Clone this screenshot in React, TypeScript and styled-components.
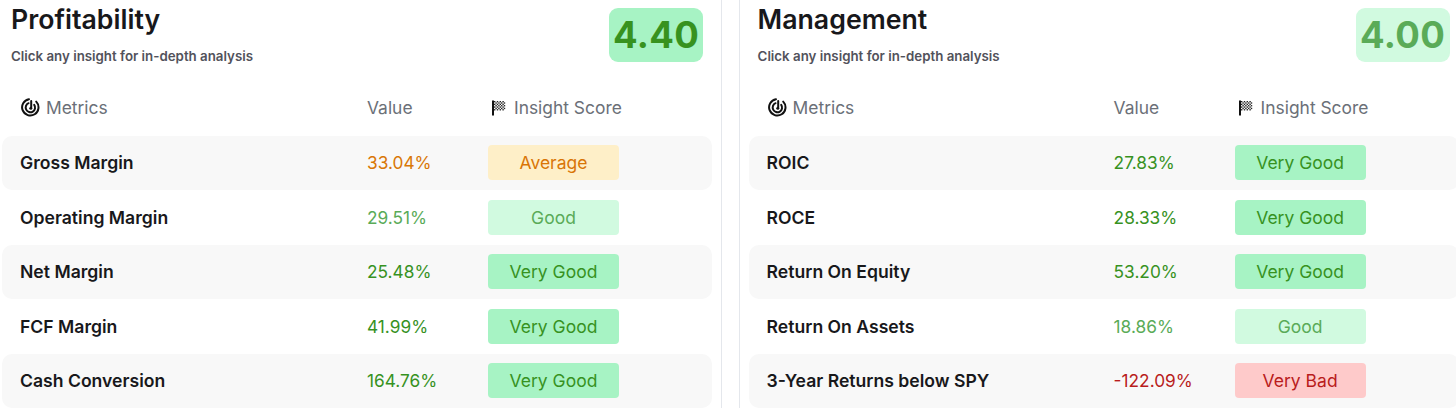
import React from "react";
import styled, { createGlobalStyle } from "styled-components";

const Global = createGlobalStyle`
  html, body { margin: 0; padding: 0; background: #fff; }
  body { font-family: Inter, "Liberation Sans", sans-serif; }
`;

type Level = "average" | "good" | "veryGood" | "veryBad";

const palette: Record<Level, { bg: string; fg: string; value: string }> = {
  average: { bg: "#feefc8", fg: "#d97506", value: "#d97706" },
  good: { bg: "#d1fae0", fg: "#5aab58", value: "#5aab58" },
  veryGood: { bg: "#a7f3c4", fg: "#37921f", value: "#37921f" },
  veryBad: { bg: "#fecaca", fg: "#b91c1c", value: "#b91c1c" },
};

const Page = styled.div`
  width: 1456px;
  height: 408px;
  overflow: hidden;
  display: flex;
  background: #fff;
`;

const Panel = styled.section`
  width: 721px;
  flex: none;
  padding: 0 9px 0 2px;
  box-sizing: border-box;
`;

const Gutter = styled.div`
  width: 19px;
  flex: none;
  height: 408px;
  box-sizing: border-box;
  border-left: 1px solid #e4e7ec;
  border-right: 1px solid #e4e7ec;
  margin-right: 6.6px;
  background: #fff;
`;

const Head = styled.header`
  height: 70px;
  display: flex;
  justify-content: space-between;
  align-items: flex-start;
  padding: 0 9px 0 9px;
`;

const Titles = styled.div`
  display: flex;
  flex-direction: column;
`;

const Title = styled.h2`
  margin: 3px 0 0;
  font-size: 26.7px;
  line-height: 32px;
  font-weight: 600;
  color: #18181b;
`;

const Sub = styled.p`
  margin: 13px 0 0;
  font-size: 13.3px;
  line-height: 16px;
  font-weight: 600;
  color: #52525b;
`;

const Score = styled.div<{ $level: Level }>`
  margin-top: 8px;
  width: 94px;
  height: 54px;
  border-radius: 9px;
  display: flex;
  align-items: center;
  justify-content: center;
  font-size: 36.5px;
  font-weight: 700;
  letter-spacing: 0.3px;
  background: ${(p) => palette[p.$level].bg};
  color: ${(p) => palette[p.$level].fg};
`;

const Cols = styled.div`
  display: grid;
  grid-template-columns: 365px 121px 131px;
  align-items: center;
`;

const HeaderRow = styled(Cols)`
  height: 65.5px;
  box-sizing: border-box;
  padding-top: 10px;
  font-size: 17.4px;
  color: #6b7078;
`;

const HeaderCell = styled.div<{ $indent?: number; $gap?: number }>`
  display: flex;
  align-items: center;
  white-space: nowrap;
  gap: ${(p) => p.$gap ?? 5}px;
  padding-left: ${(p) => p.$indent ?? 0}px;
`;

const Glyph = styled.svg`
  flex: none;
`;

const Row = styled(Cols)<{ $shaded: boolean }>`
  height: 54.5px;
  border-radius: 10px;
  background: ${(p) => (p.$shaded ? "#f8f8f8" : "transparent")};
`;

const Name = styled.div`
  padding-left: 18px;
  font-size: 17.6px;
  font-weight: 600;
  color: #18181b;
`;

const Value = styled.div<{ $level: Level }>`
  font-size: 17.3px;
  color: ${(p) => palette[p.$level].value};
`;

const Badge = styled.div<{ $level: Level }>`
  height: 35px;
  border-radius: 4px;
  display: flex;
  align-items: center;
  justify-content: center;
  font-size: 17.5px;
  background: ${(p) => palette[p.$level].bg};
  color: ${(p) => palette[p.$level].fg};
`;

const RadarIcon = () => (
  <Glyph width="19" height="19" viewBox="0 0 19 19" fill="none" stroke="#111" strokeWidth="2" strokeLinecap="round">
    <path d="M8 1.2A8.2 8.2 0 1 0 15.2 3.6" />
    <path d="M7.6 5.2A4.7 4.7 0 1 0 13.2 6.8" />
    <path d="M10.2 3V9.5" />
    <circle cx="9.8" cy="10.2" r="1.5" fill="#111" stroke="none" />
  </Glyph>
);

const FlagIcon = () => {
  const cells = [];
  for (let r = 0; r < 7; r++) {
    for (let c = 0; c < 8; c++) {
      if ((r + c) % 2 === 0)
        cells.push(<rect key={`${r}-${c}`} x={3 + c * 1.4} y={1 + r * 1.35} width="1.4" height="1.35" fill="#222" />);
    }
  }
  return (
    <Glyph width="18" height="16" viewBox="0 0 18 16">
      <rect x="1" y="0.5" width="2" height="15" fill="#111" />
      {cells}
    </Glyph>
  );
};

type Metric = { name: string; value: string; level: Level; label: string };

const Table = ({ title, score, level, metrics }: { title: string; score: string; level: Level; metrics: Metric[] }) => (
  <Panel>
    <Head>
      <Titles>
        <Title>{title}</Title>
        <Sub>Click any insight for in-depth analysis</Sub>
      </Titles>
      <Score $level={level}>{score}</Score>
    </Head>
    <HeaderRow>
      <HeaderCell $indent={19} $gap={6}>
        <RadarIcon />
        Metrics
      </HeaderCell>
      <HeaderCell>Value</HeaderCell>
      <HeaderCell $indent={3} $gap={5}>
        <FlagIcon />
        Insight&nbsp;Score
      </HeaderCell>
    </HeaderRow>
    {metrics.map((m, i) => (
      <Row key={m.name} $shaded={i % 2 === 0}>
        <Name>{m.name}</Name>
        <Value $level={m.level}>{m.value}</Value>
        <Badge $level={m.level}>{m.label}</Badge>
      </Row>
    ))}
  </Panel>
);

const profitability: Metric[] = [
  { name: "Gross Margin", value: "33.04%", level: "average", label: "Average" },
  { name: "Operating Margin", value: "29.51%", level: "good", label: "Good" },
  { name: "Net Margin", value: "25.48%", level: "veryGood", label: "Very Good" },
  { name: "FCF Margin", value: "41.99%", level: "veryGood", label: "Very Good" },
  { name: "Cash Conversion", value: "164.76%", level: "veryGood", label: "Very Good" },
];

const management: Metric[] = [
  { name: "ROIC", value: "27.83%", level: "veryGood", label: "Very Good" },
  { name: "ROCE", value: "28.33%", level: "veryGood", label: "Very Good" },
  { name: "Return On Equity", value: "53.20%", level: "veryGood", label: "Very Good" },
  { name: "Return On Assets", value: "18.86%", level: "good", label: "Good" },
  { name: "3-Year Returns below SPY", value: "-122.09%", level: "veryBad", label: "Very Bad" },
];

export default function App() {
  return (
    <Page>
      <Global />
      <Table title="Profitability" score="4.40" level="veryGood" metrics={profitability} />
      <Gutter />
      <Table title="Management" score="4.00" level="good" metrics={management} />
    </Page>
  );
}
